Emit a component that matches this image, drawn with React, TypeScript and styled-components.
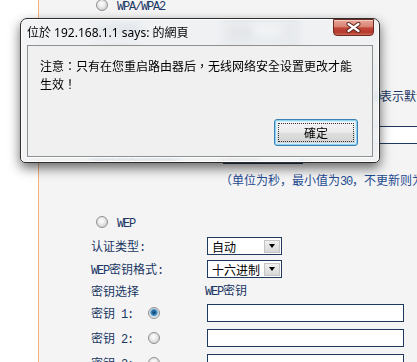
import styled, { createGlobalStyle } from 'styled-components';

const GlobalStyle = createGlobalStyle`
  html, body {
    margin: 0;
    padding: 0;
    background: #fff;
  }
  body {
    font-family: "Noto Sans CJK SC", sans-serif;
  }
`;

const Screen = styled.div`
  position: relative;
  width: 417px;
  height: 362px;
  overflow: hidden;
  display: flex;
  background: #fff;
`;

const Gutter = styled.div`
  flex: none;
  width: 38px;
`;

const Panel = styled.div`
  flex: 1;
  border-left: 1px solid #f2b07c;
  background: #f4f4f4;
  padding-left: 52px;
  color: #1a3765;
  font-size: 12px;
  display: flex;
  flex-direction: column;
`;

const Row = styled.div<{ $h: number; $mt?: number }>`
  display: flex;
  align-items: center;
  flex: none;
  height: ${p => p.$h}px;
  margin-top: ${p => p.$mt ?? 0}px;
  white-space: nowrap;
`;

const Label = styled.span<{ $w: number }>`
  flex: none;
  width: ${p => p.$w}px;
`;

const Asc = styled.span`
  font-family: "Liberation Mono", monospace;
  font-size: 12px;
  letter-spacing: -1.2px;
`;

const Hint = styled.span<{ $pl?: number }>`
  padding-left: ${p => p.$pl ?? 0}px;
  color: #1f4a92;
`;

const RadioOption = styled.label`
  display: flex;
  align-items: center;
  gap: 9px;
  padding-left: 5px;
`;

const Radio = styled.span<{ $checked?: boolean }>`
  flex: none;
  width: 12px;
  height: 12px;
  box-sizing: border-box;
  border-radius: 50%;
  border: 1px solid #8e8f8f;
  background: ${p =>
    p.$checked
      ? 'radial-gradient(circle at 50% 45%, #0f3a63 0, #2b6fa3 2px, #5ea9dc 3.4px, #cfd6dc 4px, #f2f2f2 5.5px)'
      : 'radial-gradient(circle at 45% 40%, #ffffff 0, #ececec 3px, #d6d6d6 5.5px)'};
`;

const RadioCell = styled.span`
  flex: none;
  width: 59px;
  display: flex;
`;

const Select = styled.div`
  flex: none;
  width: 75px;
  height: 18px;
  box-sizing: border-box;
  border: 1px solid #1f3a5f;
  background: #fff;
  color: #000;
  display: flex;
  align-items: center;
  justify-content: space-between;
  padding: 0 1px 0 4px;
  font-family: "Noto Sans CJK SC", sans-serif;
  font-size: 12px;
`;

const SelectArrow = styled.span`
  width: 16px;
  height: 13px;
  box-sizing: border-box;
  border: 1px solid #c4c4c4;
  background: linear-gradient(#f0f0f0, #d8d8d8);
  display: flex;
  align-items: center;
  justify-content: center;

  &::after {
    content: '';
    border-left: 3.5px solid transparent;
    border-right: 3.5px solid transparent;
    border-top: 4px solid #000;
  }
`;

const TextBox = styled.input<{ $w: number }>`
  flex: none;
  width: ${p => p.$w}px;
  height: 18px;
  box-sizing: border-box;
  border: 1px solid #1f3a5f;
  background: #fff;
  padding: 0 3px;
  font-size: 12px;
  outline: none;
`;

const Note = styled.span`
  margin-left: 7px;
`;

/* ---- dialog ---- */

const Dialog = styled.div`
  position: absolute;
  left: 20px;
  top: 18px;
  width: 360px;
  height: 145px;
  box-sizing: border-box;
  border: 1px solid #2e2e2e;
  border-radius: 7px 7px 5px 5px;
  padding: 0 6px 5px;
  display: flex;
  flex-direction: column;
  background: rgba(238, 240, 243, 0.82);
  backdrop-filter: blur(4px);
  box-shadow: inset 0 0 0 1px rgba(255, 255, 255, 0.85), 0 5px 12px rgba(0, 0, 0, 0.58);
`;

const TitleBar = styled.div`
  position: relative;
  height: 26px;
  flex: none;
  display: flex;
  align-items: center;
  font-family: "Noto Sans", "Noto Sans CJK TC", sans-serif;
  font-size: 12px;
  color: #000;
`;

const CloseButton = styled.div`
  position: absolute;
  top: 0;
  right: -1px;
  width: 41px;
  height: 17px;
  box-sizing: border-box;
  border: 1px solid #6e2a20;
  border-radius: 0 0 4px 4px;
  background: linear-gradient(#e8a597 0%, #d98473 45%, #c2473a 52%, #b53a2d 82%, #cc6a55 100%);
  box-shadow: inset 0 1px 0 rgba(255, 255, 255, 0.45);
  display: flex;
  align-items: center;
  justify-content: center;
`;

const Body = styled.div`
  flex: 1;
  border: 1px solid #8e8f8f;
  background: #f0f0f0;
  padding: 11px 12px 10px;
  display: flex;
  flex-direction: column;
  font-family: "Noto Sans CJK TC", sans-serif;
  font-size: 12px;
  color: #000;
  box-shadow: 0 1px 0 rgba(255, 255, 255, 0.9);
`;

const Message = styled.div`
  line-height: 18px;
`;

const Actions = styled.div`
  margin-top: auto;
  display: flex;
  justify-content: flex-end;
  padding-right: 2px;
`;

const OkButton = styled.button`
  width: 84px;
  height: 27px;
  box-sizing: border-box;
  border: 1px solid #3c7fb1;
  border-radius: 3px;
  background: linear-gradient(#f3f3f3 0%, #ececec 48%, #dedede 52%, #d0d0d0 100%);
  box-shadow: inset 0 0 0 1px #8fd3f2, inset 0 0 0 2px #d6f0fb;
  outline: 1px dotted #333;
  outline-offset: -5px;
  font-family: "Noto Sans CJK TC", sans-serif;
  font-size: 12px;
  color: #000;
  padding: 0;
`;

const mixed = (s: string) =>
  s.split(/([\x20-\x7e]+)/).map((part, i) =>
    /^[\x20-\x7e]+$/.test(part) ? <Asc key={i}>{part}</Asc> : part
  );

const Dropdown = ({ value }: { value: string }) => (
  <Select>
    <span>{value}</span>
    <SelectArrow />
  </Select>
);

export default function App() {
  return (
    <>
      <GlobalStyle />
      <Screen>
        <Gutter />
        <Panel>
          <Row $h={22} $mt={-6}>
            <RadioOption>
              <Radio />
              <span>{mixed('WPA/WPA2')}</span>
            </RadioOption>
          </Row>
          <Row $h={22} $mt={3}>
            <Label $w={132}>{mixed('认证类型:')}</Label>
            <Dropdown value="自动" />
          </Row>
          <Row $h={22}>
            <Label $w={132}>{mixed('加密算法:')}</Label>
            <Dropdown value="自动" />
          </Row>
          <Row $h={22}>
            <Label $w={132}>{mixed('Radius服务器IP:')}</Label>
            <TextBox $w={150} readOnly />
          </Row>
          <Row $h={22}>
            <Label $w={132}>{mixed('Radius端口:')}</Label>
            <TextBox $w={90} readOnly defaultValue="1812" />
            <Note>{mixed('(1-65535,0表示默认端口：1812)')}</Note>
          </Row>
          <Row $h={23} $mt={16}>
            <Label $w={132}>{mixed('Radius密码:')}</Label>
            <TextBox $w={220} readOnly />
          </Row>
          <Row $h={18}>
            <Label $w={132}>{mixed('组密钥更新周期:')}</Label>
            <TextBox $w={80} readOnly defaultValue="86400" />
          </Row>
          <Row $h={16} $mt={8}>
            <Hint $pl={129}>{mixed('（单位为秒，最小值为30，不更新则为0）')}</Hint>
          </Row>

          <Row $h={22} $mt={23}>
            <RadioOption>
              <Radio />
              <span>{mixed('WEP')}</span>
            </RadioOption>
          </Row>
          <Row $h={22} $mt={2}>
            <Label $w={116}>{mixed('认证类型:')}</Label>
            <Dropdown value="自动" />
          </Row>
          <Row $h={22} $mt={1}>
            <Label $w={116}>{mixed('WEP密钥格式:')}</Label>
            <Dropdown value="十六进制" />
          </Row>
          <Row $h={20}>
            <Label $w={114}>密钥选择</Label>
            <span>{mixed('WEP密钥')}</span>
          </Row>
          <Row $h={24} $mt={1}>
            <Label $w={57}>{mixed('密钥 1:')}</Label>
            <RadioCell>
              <Radio $checked />
            </RadioCell>
            <TextBox $w={197} readOnly />
          </Row>
          <Row $h={24} $mt={1}>
            <Label $w={57}>{mixed('密钥 2:')}</Label>
            <RadioCell>
              <Radio />
            </RadioCell>
            <TextBox $w={197} readOnly />
          </Row>
          <Row $h={24} $mt={1}>
            <Label $w={57}>{mixed('密钥 3:')}</Label>
            <RadioCell>
              <Radio />
            </RadioCell>
            <TextBox $w={197} readOnly />
          </Row>
        </Panel>

        <Dialog>
          <TitleBar>
            位於 192.168.1.1 says: 的網頁
            <CloseButton>
              <svg width="15" height="11" viewBox="0 0 15 11">
                <path d="M2.5 2 L12.5 9 M12.5 2 L2.5 9" stroke="#5a1f17" strokeWidth="4" strokeLinecap="round" />
                <path d="M2.5 2 L12.5 9 M12.5 2 L2.5 9" stroke="#fff" strokeWidth="2.2" strokeLinecap="round" />
              </svg>
            </CloseButton>
          </TitleBar>
          <Body>
            <Message>注意：只有在您重启路由器后，无线网络安全设置更改才能生效！</Message>
            <Actions>
              <OkButton>確定</OkButton>
            </Actions>
          </Body>
        </Dialog>
      </Screen>
    </>
  );
}
